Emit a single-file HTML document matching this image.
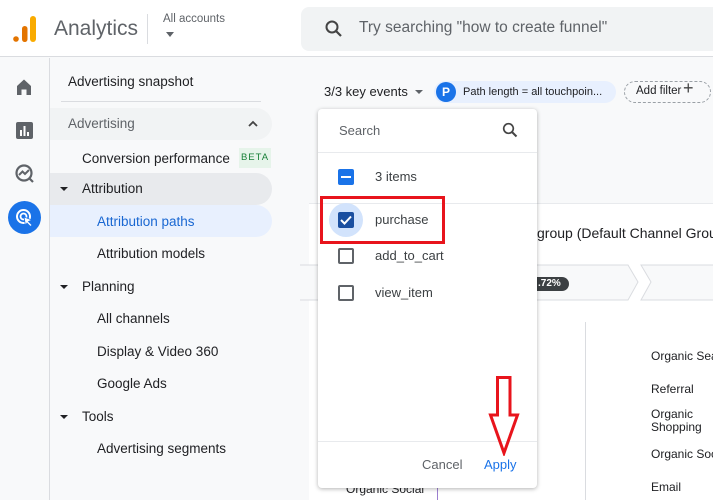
<!DOCTYPE html>
<html><head><meta charset="utf-8"><style>
*{box-sizing:border-box;margin:0;padding:0}
body{width:713px;height:500px;overflow:hidden;background:#f8f9fa;font-family:"Liberation Sans",sans-serif;color:#202124;position:relative}
.a{position:absolute;white-space:nowrap}
.nav{font-size:13.5px;color:#202124}
</style></head><body>
<div class="a" style="left:0;top:0;width:713px;height:57px;background:#fff;border-bottom:1px solid #dadce0"></div>
<svg class="a" style="left:12px;top:14px" width="26" height="30"><circle cx="4" cy="25" r="2.8" fill="#e37400"/><rect x="10" y="12" width="5.5" height="16" rx="2.7" fill="#e37400"/><rect x="18" y="2" width="6" height="26" rx="3" fill="#f9ab00"/></svg>
<div class="a" style="left:54px;top:17px;font-size:21px;color:#5f6368">Analytics</div>
<div class="a" style="left:147px;top:14px;width:1px;height:30px;background:#dadce0"></div>
<div class="a" style="left:163px;top:13px;font-size:11.5px;color:#5f6368">All accounts</div>
<div class="a" style="left:166px;top:32px;width:0;height:0;border-left:4px solid transparent;border-right:4px solid transparent;border-top:5px solid #5f6368"></div>
<div class="a" style="left:301px;top:7px;width:420px;height:44px;background:#f1f3f4;border-radius:8px"></div>
<svg class="a" style="left:324px;top:19px" width="20" height="20"><circle cx="8" cy="8" r="5.5" fill="none" stroke="#444" stroke-width="2"/><line x1="12" y1="12" x2="17" y2="17" stroke="#444" stroke-width="2.2"/></svg>
<div class="a" style="left:359px;top:19px;font-size:15.5px;color:#5f6368">Try searching "how to create funnel"</div>
<div class="a" style="left:49px;top:58px;width:1px;height:442px;background:#dadce0"></div>
<svg class="a" style="left:14px;top:77px" width="20" height="20"><path d="M3 9 L10 2.5 L17 9 V18 H12.5 V12.5 H7.5 V18 H3Z" fill="#5f6368"/></svg>
<svg class="a" style="left:15px;top:121px" width="19" height="19"><rect x="1" y="1" width="17" height="17" rx="2" fill="#5f6368"/><rect x="5" y="9" width="2" height="6" fill="#fff"/><rect x="8.5" y="5" width="2" height="10" fill="#fff"/><rect x="12" y="11" width="2" height="4" fill="#fff"/></svg>
<svg class="a" style="left:14px;top:163px" width="21" height="21"><circle cx="10" cy="10" r="7.5" fill="none" stroke="#5f6368" stroke-width="2.2"/><path d="M5 12 L8.5 8.5 L11 11 L15 7" fill="none" stroke="#5f6368" stroke-width="2"/><path d="M15 15 L19 19" stroke="#5f6368" stroke-width="2.2"/></svg>
<div class="a" style="left:8px;top:201px;width:33px;height:33px;border-radius:50%;background:#1a73e8"></div>
<svg class="a" style="left:13px;top:206px" width="23" height="23"><circle cx="10.5" cy="10.5" r="6.5" fill="none" stroke="#fff" stroke-width="2"/><circle cx="10.5" cy="10.5" r="3" fill="none" stroke="#fff" stroke-width="1.8"/><path d="M11 11 L19 14 L15.5 15.5 L19 19 L17.5 20.5 L14 17 L12.5 19.5Z" fill="#fff" stroke="#1a73e8" stroke-width="0.8"/></svg>
<div class="a nav" style="left:68px;top:74px">Advertising snapshot</div>
<div class="a" style="left:61px;top:101px;width:200px;height:1px;background:#dadce0"></div>
<div class="a" style="left:50px;top:108px;width:222px;height:32px;background:#f1f3f4;border-radius:0 16px 16px 0"></div>
<div class="a nav" style="left:68px;top:116px;color:#5f6368">Advertising</div>
<svg class="a" style="left:247px;top:119px" width="12" height="10"><path d="M2 7 L6 3 L10 7" fill="none" stroke="#444" stroke-width="1.8"/></svg>
<div class="a nav" style="left:82px;top:151px">Conversion performance</div>
<div class="a" style="left:239px;top:148px;width:32px;height:20px;background:#e6f4ea;color:#188038;font-size:9.5px;letter-spacing:1px;line-height:20px;text-align:center">BETA</div>
<div class="a" style="left:50px;top:173px;width:222px;height:32px;background:#e8eaed;border-radius:0 16px 16px 0"></div>
<div class="a" style="left:60px;top:187px;border-left:4px solid transparent;border-right:4px solid transparent;border-top:4px solid #202124"></div>
<div class="a nav" style="left:82px;top:181px">Attribution</div>
<div class="a" style="left:50px;top:205px;width:222px;height:32px;background:#e8f0fe;border-radius:0 16px 16px 0"></div>
<div class="a nav" style="left:97px;top:214px;color:#1967d2">Attribution paths</div>
<div class="a nav" style="left:97px;top:246px">Attribution models</div>
<div class="a" style="left:60px;top:285px;border-left:4px solid transparent;border-right:4px solid transparent;border-top:4px solid #202124"></div>
<div class="a nav" style="left:82px;top:279px">Planning</div>
<div class="a nav" style="left:97px;top:311px">All channels</div>
<div class="a nav" style="left:97px;top:344px">Display &amp; Video 360</div>
<div class="a nav" style="left:97px;top:376px">Google Ads</div>
<div class="a" style="left:60px;top:415px;border-left:4px solid transparent;border-right:4px solid transparent;border-top:4px solid #202124"></div>
<div class="a nav" style="left:82px;top:409px">Tools</div>
<div class="a nav" style="left:97px;top:441px">Advertising segments</div>
<div class="a" style="left:324px;top:84px;font-size:13px">3/3 key events</div>
<div class="a" style="left:415px;top:90px;border-left:4px solid transparent;border-right:4px solid transparent;border-top:4px solid #5f6368"></div>
<div class="a" style="left:434px;top:81px;width:182px;height:22px;background:#e8f0fe;border-radius:11px"></div>
<div class="a" style="left:436px;top:82px;width:20px;height:20px;border-radius:50%;background:#1a73e8;color:#fff;font-size:12px;font-weight:bold;text-align:center;line-height:20px">P</div>
<div class="a" style="left:463px;top:86px;font-size:11px">Path length = all touchpoin...</div>
<div class="a" style="left:624px;top:81px;width:87px;height:22px;border:1px dashed #9aa0a6;border-radius:11px"></div>
<div class="a" style="left:636px;top:85px;font-size:11.5px">Add filter</div>
<div class="a" style="left:683px;top:78px;font-size:18px;color:#444">+</div>
<div class="a" style="left:309px;top:203px;width:404px;height:297px;background:#fff;border-top:1px solid #e8eaed"></div>
<div class="a" style="left:537px;top:225px;font-size:14px">group (Default Channel Group</div>
<svg class="a" style="left:300px;top:264px" width="413" height="38"><path d="M0 1 H628 L638 18 L628 36 H0" transform="translate(-300 0)" fill="#f8f9fa" stroke="#dadce0"/><path d="M341 1 H414 V36 H341 L351 18 Z" fill="#f8f9fa" stroke="#dadce0"/></svg>
<div class="a" style="left:530px;top:277px;width:39px;height:14px;background:#3c4043;border-radius:7px;color:#fff;font-size:10px;font-weight:bold;line-height:14px;padding-left:8px">.72%</div>
<div class="a" style="left:585px;top:322px;width:1px;height:178px;background:#dadce0"></div>
<div class="a" style="left:437px;top:482px;width:1px;height:18px;background:#9c7fd0"></div>
<div class="a" style="left:346px;top:482px;font-size:12px">Organic Social</div>
<div class="a" style="left:651px;top:349px;font-size:12px">Organic Search</div>
<div class="a" style="left:651px;top:382px;font-size:12px">Referral</div>
<div class="a" style="left:651px;top:408px;font-size:12px;line-height:13px;white-space:normal;width:60px">Organic Shopping</div>
<div class="a" style="left:651px;top:447px;font-size:12px">Organic Social</div>
<div class="a" style="left:651px;top:480px;font-size:12px">Email</div>
<div class="a" style="left:318px;top:109px;width:219px;height:379px;background:#fff;border-radius:4px;box-shadow:0 1px 4px rgba(0,0,0,.3)"></div>
<div class="a" style="left:339px;top:123px;font-size:13px;color:#5f6368">Search</div>
<svg class="a" style="left:502px;top:122px" width="16" height="16"><circle cx="6.5" cy="6.5" r="4.8" fill="none" stroke="#444" stroke-width="1.7"/><line x1="10" y1="10" x2="14.5" y2="14.5" stroke="#444" stroke-width="2"/></svg>
<div class="a" style="left:318px;top:152px;width:219px;height:1px;background:#e8eaed"></div>
<div class="a" style="left:338px;top:169px;width:16px;height:16px;background:#1a73e8;border-radius:2px"></div>
<div class="a" style="left:341px;top:176px;width:10px;height:2px;background:#fff"></div>
<div class="a" style="left:375px;top:169px;font-size:13px;color:#3c4043">3 items</div>
<div class="a" style="left:318px;top:203px;width:219px;height:1px;background:#e8eaed"></div>
<div class="a" style="left:329px;top:203px;width:34px;height:34px;border-radius:50%;background:#d2e3fc"></div>
<div class="a" style="left:338px;top:212px;width:16px;height:16px;background:#1a4fa0;border-radius:2px"></div>
<svg class="a" style="left:338px;top:212px" width="16" height="16"><path d="M3 8 L6.5 11.5 L13 4.5" fill="none" stroke="#fff" stroke-width="2"/></svg>
<div class="a" style="left:375px;top:212px;font-size:13px;color:#3c4043">purchase</div>
<div class="a" style="left:338px;top:248px;width:16px;height:16px;border:2px solid #5f6368;border-radius:2px"></div>
<div class="a" style="left:375px;top:248px;font-size:13px;color:#3c4043">add_to_cart</div>
<div class="a" style="left:338px;top:285px;width:16px;height:16px;border:2px solid #5f6368;border-radius:2px"></div>
<div class="a" style="left:375px;top:285px;font-size:13px;color:#3c4043">view_item</div>
<div class="a" style="left:318px;top:441px;width:219px;height:1px;background:#e8eaed"></div>
<div class="a" style="left:422px;top:457px;font-size:13px;color:#5f6368">Cancel</div>
<div class="a" style="left:484px;top:457px;font-size:13px;color:#1a73e8">Apply</div>
<div class="a" style="left:320px;top:196px;width:125px;height:48px;border:3px solid #e8141c"></div>
<svg class="a" style="left:488px;top:376px" width="32" height="80"><path d="M9.5 1.5 H22 V39 H29.5 L16 77 L2.5 39 H9.5Z" fill="none" stroke="#e8141c" stroke-width="3"/></svg>
</body></html>
